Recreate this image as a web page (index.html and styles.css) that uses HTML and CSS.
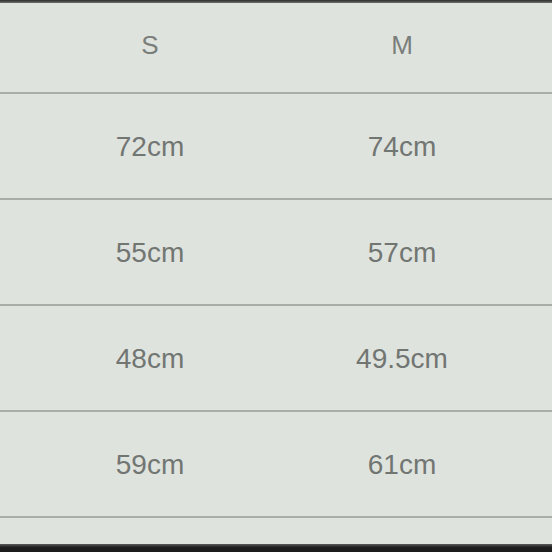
FILE: index.html
```html
<!DOCTYPE html>
<html>
<head>
<meta charset="utf-8">
<link rel="stylesheet" href="styles.css">
</head>
<body>
<div class="frame">
  <div class="topbar"></div>
  <div class="table">
    <div class="row head"><div class="cell">S</div><div class="cell">M</div></div>
    <div class="row"><div class="cell">72cm</div><div class="cell">74cm</div></div>
    <div class="row"><div class="cell">55cm</div><div class="cell">57cm</div></div>
    <div class="row"><div class="cell">48cm</div><div class="cell">49.5cm</div></div>
    <div class="row"><div class="cell">59cm</div><div class="cell">61cm</div></div>
  </div>
  <div class="tail"></div>
  <div class="bottombar"></div>
</div>
</body>
</html>
```
FILE: styles.css
```css
html, body {
  margin: 0;
  padding: 0;
  background: #dfe3de;
}
.frame {
  width: 552px;
  height: 552px;
  display: flex;
  flex-direction: column;
  overflow: hidden;
  background: #dfe3de;
  font-family: "Liberation Sans", Arial, sans-serif;
}
.topbar {
  height: 3px;
  background: linear-gradient(#2b2c2b, #6d706d);
  flex: none;
}
.table {
  display: flex;
  flex-direction: column;
}
.row {
  display: grid;
  grid-template-columns: 1fr 1fr;
  padding: 0 24px;
  height: 104px;
  align-items: center;
  border-bottom: 2px solid #a9adaa;
}
.row.head {
  height: 88px;
  padding-bottom: 4px;
  margin-top: -3px;
}
.cell {
  text-align: center;
  font-size: 28px;
  color: #727673;
  padding-top: 2px;
}
.head .cell {
  font-size: 26px;
  color: #7a7e7b;
}
.tail {
  flex: 1;
}
.bottombar {
  height: 8px;
  flex: none;
  background: linear-gradient(#5a5c5a, #1e1f1e 40%, #1a1a1a);
}
```
